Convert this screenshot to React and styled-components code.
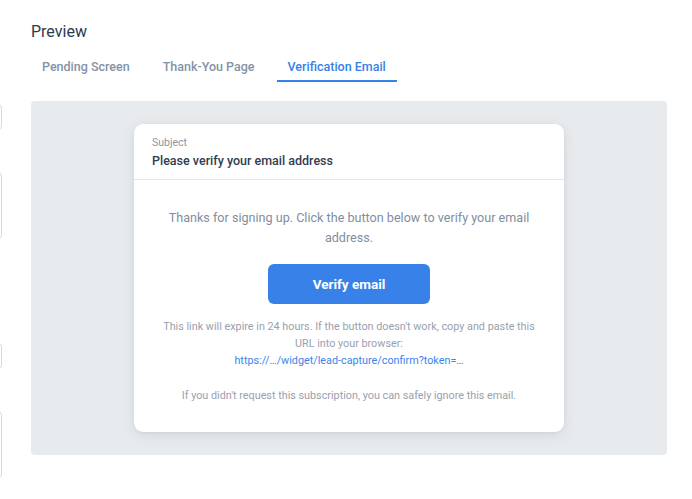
import React from 'react'
import styled, { createGlobalStyle } from 'styled-components'

const GlobalStyle = createGlobalStyle`
    html, body {
        margin: 0;
        padding: 0;
        background: #ffffff;
        font-family: Roboto, "Liberation Sans", sans-serif;
        overflow: hidden;
    }
`

const Page = styled.div`
    width: 692px;
    height: 499px;
    display: flex;
    align-items: flex-start;
    gap: 29px;
    overflow: hidden;
`

const FormColumn = styled.div`
    flex: 0 0 260px;
    margin-left: -258px;
    display: flex;
    flex-direction: column;
    padding-top: 104px;
`

const Field = styled.div`
    height: ${p => (p.$tall ? '67px' : '26px')};
    margin-top: ${p => p.$space || 0}px;
    border: 1px solid #d6dae0;
    border-radius: 4px;
    box-sizing: border-box;
    background: #fff;
`

const PreviewColumn = styled.div`
    flex: 0 0 636px;
    padding-top: 22px;
`

const Heading = styled.h2`
    margin: 0;
    font-size: 16px;
    line-height: 20px;
    font-weight: 400;
    color: #2d3a4b;
`

const Tabs = styled.div`
    display: flex;
    gap: 11px;
    margin-top: 11px;
`

const Tab = styled.button`
    background: transparent;
    border: none;
    border-bottom: 2px solid ${p => (p.$active ? '#3781e8' : 'transparent')};
    padding: 6px 11px 5px;
    font-family: inherit;
    font-size: 12.5px;
    line-height: 16px;
    font-weight: 500;
    color: ${p => (p.$active ? '#3781e8' : '#8592a6')};
    cursor: pointer;
`

const Stage = styled.div`
    margin-top: 19px;
    background: #e8ebee;
    border-radius: 4px;
    padding: 23px 0;
    display: flex;
    justify-content: center;
`

const Card = styled.div`
    width: 430px;
    background: #fff;
    border-radius: 9px;
    box-shadow: 0 3px 14px rgba(30, 40, 60, 0.10), 0 1px 3px rgba(30, 40, 60, 0.06);
    overflow: hidden;
`

const CardHeader = styled.div`
    padding: 12px 18px 9px;
    border-bottom: 1px solid #e1e4e8;
`

const SubjectLabel = styled.div`
    font-size: 10.5px;
    line-height: 14px;
    color: #8b95a3;
`

const SubjectText = styled.div`
    margin-top: 2px;
    font-size: 12.5px;
    line-height: 18px;
    font-weight: 500;
    color: #2f3d4f;
`

const CardBody = styled.div`
    padding: 28px 26px 28px;
    display: flex;
    flex-direction: column;
    align-items: center;
    text-align: center;
`

const Lead = styled.p`
    margin: 0;
    padding: 0 6px;
    font-size: 12.6px;
    line-height: 20px;
    color: #818ea0;
`

const VerifyButton = styled.button`
    margin-top: 16px;
    width: 162px;
    height: 40px;
    border: none;
    border-radius: 6px;
    background: #3781e8;
    color: #fff;
    font-family: inherit;
    font-size: 13.5px;
    font-weight: 700;
    cursor: pointer;
`

const Note = styled.p`
    margin: ${p => p.$top || 0}px 0 0;
    font-size: 10.8px;
    line-height: 17px;
    color: #98a1ae;
`

const Link = styled.a`
    display: block;
    color: #3b84ec;
    text-decoration: none;
`

const App = () => {
    return (
        <>
            <GlobalStyle />
            <Page>
                <FormColumn>
                    <Field />
                    <Field $tall $space={42} />
                    <Field $space={104} />
                    <Field $tall $space={42} />
                </FormColumn>

                <PreviewColumn>
                    <Heading>Preview</Heading>
                    <Tabs>
                        <Tab>Pending Screen</Tab>
                        <Tab>Thank-You Page</Tab>
                        <Tab $active>Verification Email</Tab>
                    </Tabs>

                    <Stage>
                        <Card>
                            <CardHeader>
                                <SubjectLabel>Subject</SubjectLabel>
                                <SubjectText>Please verify your email address</SubjectText>
                            </CardHeader>
                            <CardBody>
                                <Lead>
                                    Thanks for signing up. Click the button below to verify your email address.
                                </Lead>
                                <VerifyButton>Verify email</VerifyButton>
                                <Note $top={14}>
                                    This link will expire in 24 hours. If the button doesn't work, copy and paste this URL into your browser:
                                    <Link href="#">https://…/widget/lead-capture/confirm?token=…</Link>
                                </Note>
                                <Note $top={18}>
                                    If you didn't request this subscription, you can safely ignore this email.
                                </Note>
                            </CardBody>
                        </Card>
                    </Stage>
                </PreviewColumn>
            </Page>
        </>
    )
}

export default App
